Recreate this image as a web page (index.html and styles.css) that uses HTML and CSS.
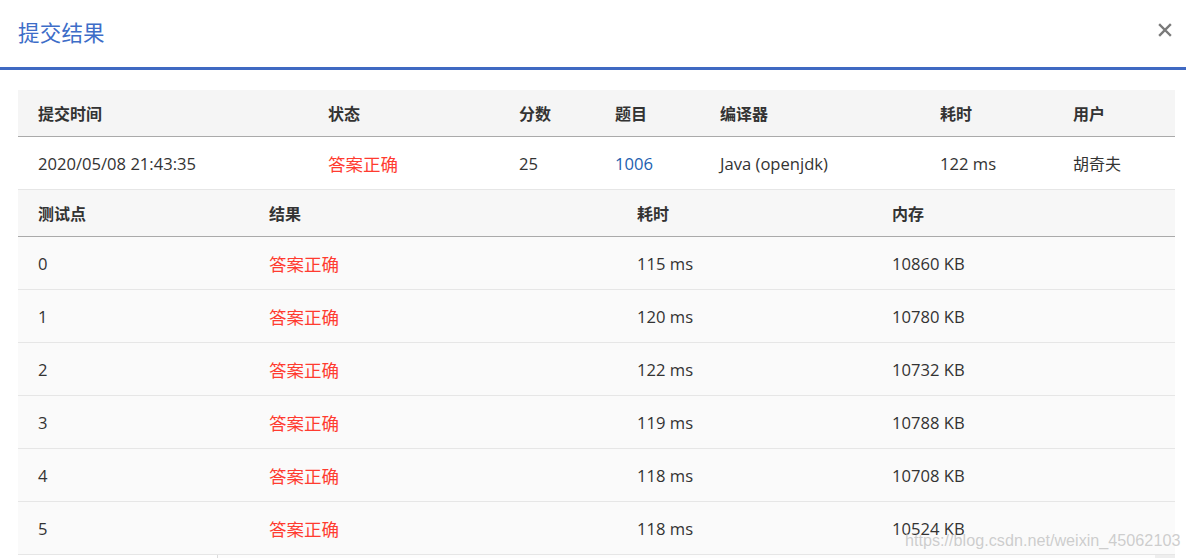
FILE: index.html
```html
<!DOCTYPE html>
<html lang="zh-CN">
<head>
<meta charset="utf-8">
<title>提交结果</title>
<link rel="stylesheet" href="styles.css">
</head>
<body>
<div class="modal">
  <header class="modal-header">
    <h2 class="modal-title">提交结果</h2>
    <button class="close" aria-label="关闭">
      <svg width="14" height="14" viewBox="0 0 14 14"><path d="M2 2 L12 12 M12 2 L2 12" stroke="#7a7a7a" stroke-width="2.4" stroke-linecap="square"/></svg>
    </button>
  </header>
  <div class="modal-body">
    <table class="grid summary">
      <colgroup>
        <col style="width:290px"><col style="width:191px"><col style="width:96px"><col style="width:105px"><col style="width:220px"><col style="width:133px"><col>
      </colgroup>
      <thead>
        <tr><th>提交时间</th><th>状态</th><th>分数</th><th>题目</th><th>编译器</th><th>耗时</th><th>用户</th></tr>
      </thead>
      <tbody>
        <tr>
          <td>2020/05/08 21:43:35</td>
          <td class="ok">答案正确</td>
          <td>25</td>
          <td><a class="link" href="#">1006</a></td>
          <td>Java (openjdk)</td>
          <td>122 ms</td>
          <td class="cn">胡奇夫</td>
        </tr>
      </tbody>
    </table>
    <table class="grid cases">
      <colgroup>
        <col style="width:231px"><col style="width:368px"><col style="width:255px"><col>
      </colgroup>
      <thead>
        <tr><th>测试点</th><th>结果</th><th>耗时</th><th>内存</th></tr>
      </thead>
      <tbody>
        <tr><td>0</td><td class="ok">答案正确</td><td>115 ms</td><td>10860 KB</td></tr>
        <tr><td>1</td><td class="ok">答案正确</td><td>120 ms</td><td>10780 KB</td></tr>
        <tr><td>2</td><td class="ok">答案正确</td><td>122 ms</td><td>10732 KB</td></tr>
        <tr><td>3</td><td class="ok">答案正确</td><td>119 ms</td><td>10788 KB</td></tr>
        <tr><td>4</td><td class="ok">答案正确</td><td>118 ms</td><td>10708 KB</td></tr>
        <tr><td>5</td><td class="ok">答案正确</td><td>118 ms</td><td>10524 KB</td></tr>
      </tbody>
    </table>
    <div class="scroll-track"><div class="scroll-thumb"></div></div>
  </div>
  <div class="watermark">https://blog.csdn.net/weixin_45062103</div>
</div>
</body>
</html>
```

FILE: styles.css
```css
html, body {
  margin: 0;
  padding: 0;
  background: #fff;
  overflow: hidden;
  height: 558px;
}
body {
  font-family: "Open Sans", "Noto Sans CJK SC", sans-serif;
  color: #333;
}
.modal {
  position: relative;
  width: 1186px;
  height: 558px;
}
.modal-header {
  height: 67px;
  border-bottom: 3px solid #3f69c2;
  display: flex;
  align-items: center;
  justify-content: space-between;
  padding: 0 14px 0 18px;
  box-sizing: content-box;
}
.modal-title {
  margin: 0;
  font-family: "Noto Sans CJK SC", sans-serif;
  font-weight: 400;
  font-size: 21.5px;
  color: #3d6dc8;
  letter-spacing: 0.2px;
  padding-bottom: 5px;
}
.close {
  border: 0;
  background: none;
  padding: 0;
  width: 14px;
  height: 14px;
  display: flex;
  margin-bottom: 7px;
}
.modal-body {
  padding: 20px 11px 0 18px;
}
.grid {
  width: 1157px;
  border-collapse: collapse;
  table-layout: fixed;
}
.grid th {
  height: 46px;
  padding: 0 0 0 20px;
  text-align: left;
  font-family: "Noto Sans CJK SC", sans-serif;
  font-size: 16px;
  font-weight: 700;
  color: #333;
  border-bottom: 1px solid #aaa;
  background: #f5f5f5;
}
.grid td {
  height: 52px;
  padding: 0 0 0 20px;
  font-size: 16.6px;
  color: #333;
  border-bottom: 1px solid #e6e6e6;
  white-space: nowrap;
}
.summary td { background: #fff; }
.cases th { background: #f7f7f7; }
.cases td { background: #fafafa; }
.grid td.ok {
  font-family: "Noto Sans CJK SC", sans-serif;
  font-size: 17.5px;
  color: #ff3b30;
}
.grid td.cn {
  font-family: "Noto Sans CJK SC", sans-serif;
  font-size: 16px;
}
.link {
  color: #1d5fb0;
  text-decoration: none;
}
.scroll-track {
  margin-left: 199px;
  height: 6px;
  border-left: 1px solid #ddd;
  background: #fdfdfd;
  display: flex;
  justify-content: flex-end;
}
.scroll-thumb {
  width: 20px;
  background: #eee;
}
.watermark {
  position: absolute;
  left: 905px;
  top: 531px;
  font-family: "Liberation Sans", Arial, sans-serif;
  font-size: 16.2px;
  color: rgba(190, 190, 190, 0.75);
  white-space: nowrap;
  pointer-events: none;
}
```
